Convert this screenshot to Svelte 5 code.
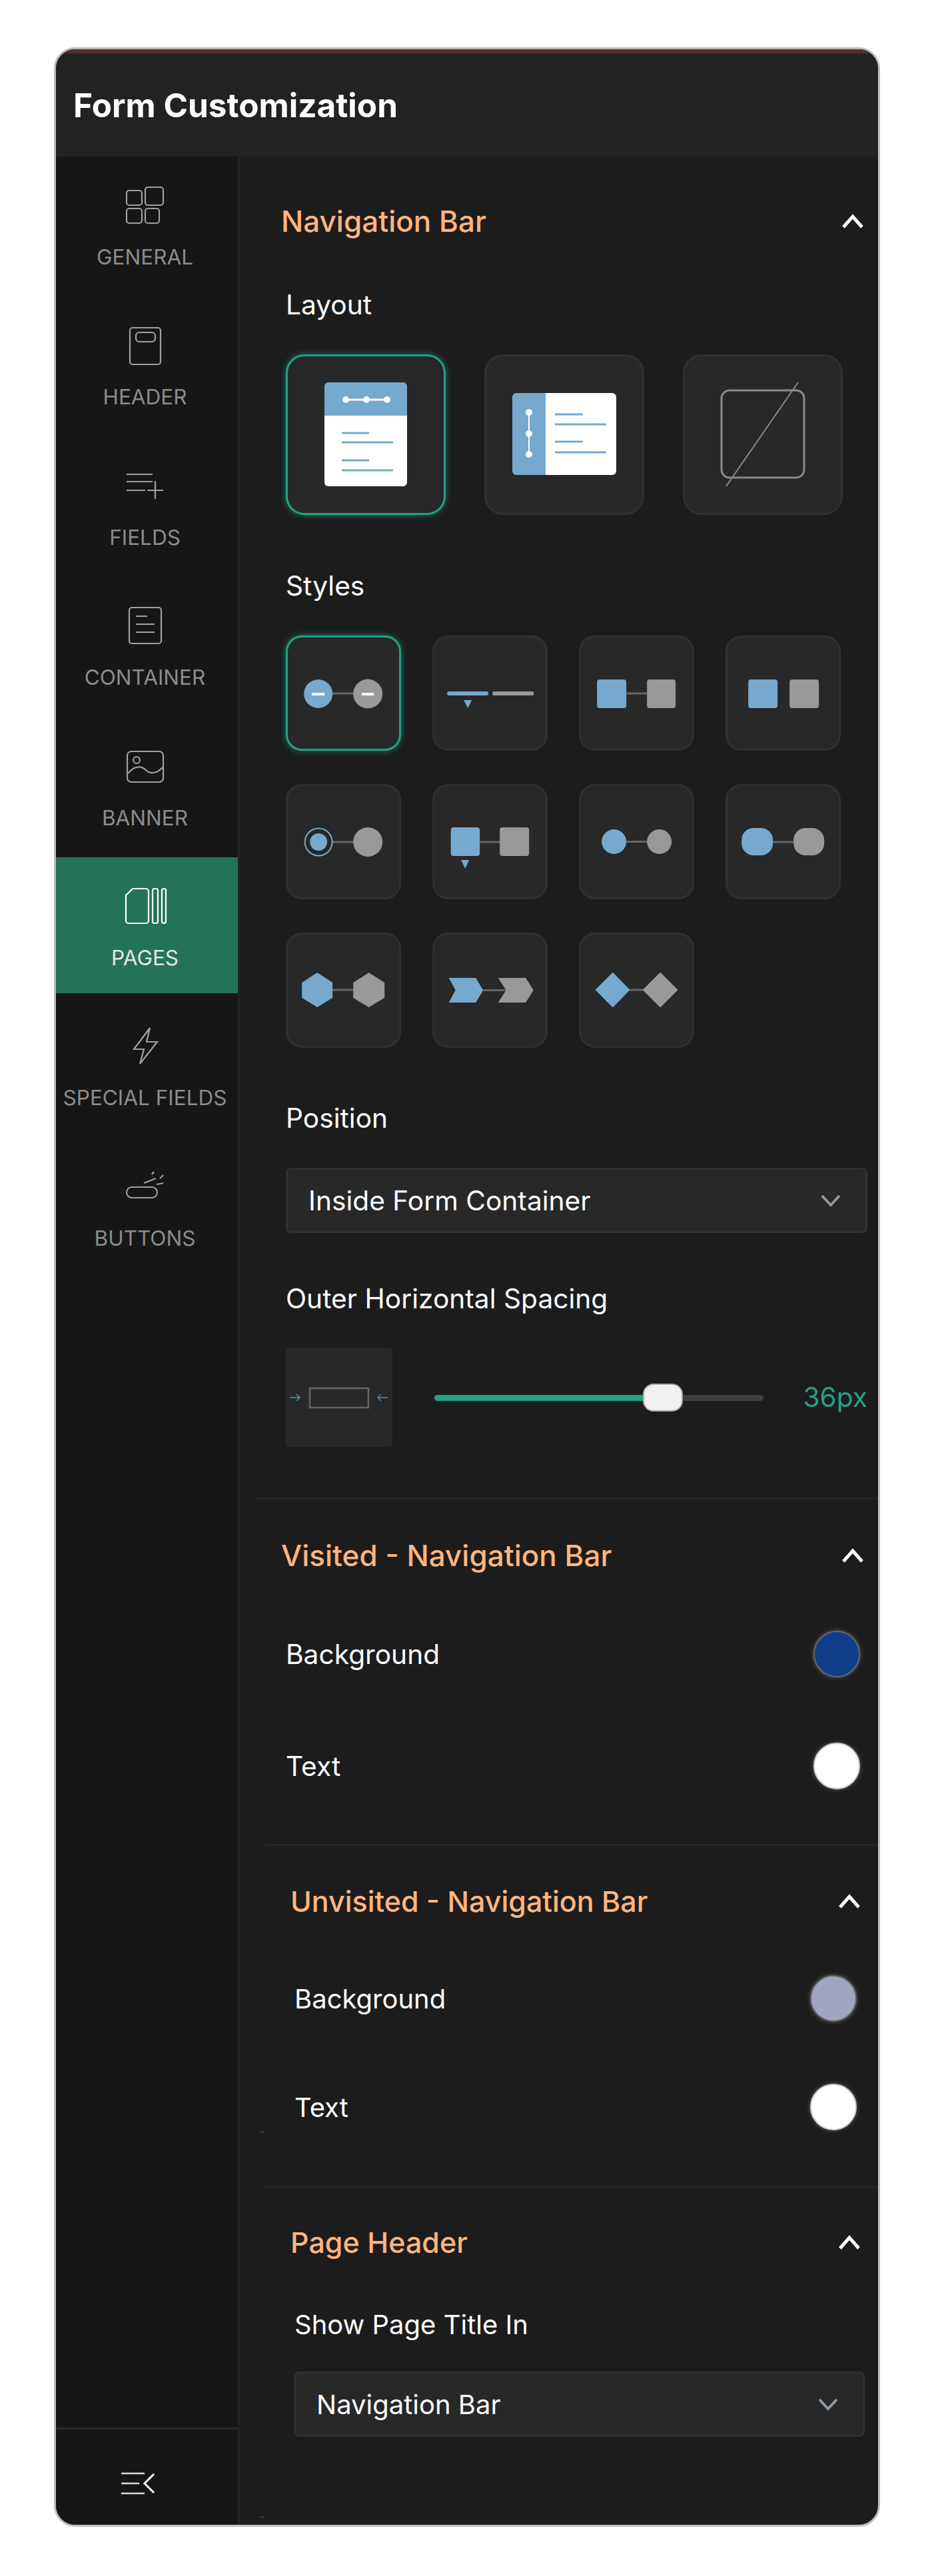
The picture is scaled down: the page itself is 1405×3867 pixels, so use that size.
<script>
  const B = '#76a9cd';
  const G = '#999999';
</script>

<div class="frame">
  <header class="top"><h1>Form Customization</h1></header>
  <div class="body">
    <aside class="side">
      <nav class="items">
        <div class="item">
          <svg class="ico" viewBox="0 0 70 70"><rect x="7" y="14" width="23" height="22" rx="4"/><rect x="35" y="9" width="27" height="27" rx="4"/><rect x="7" y="41" width="23" height="22" rx="4"/><rect x="35" y="41" width="21" height="22" rx="4"/></svg>
          <span>GENERAL</span>
        </div>
        <div class="item">
          <svg class="ico" viewBox="0 0 70 70"><rect x="12" y="10" width="46" height="55" rx="4"/><rect x="21" y="17" width="29" height="14" rx="5"/></svg>
          <span>HEADER</span>
        </div>
        <div class="item">
          <svg class="ico" viewBox="0 0 70 70"><path d="M7 19H46M7 30H46M7 43H35M38 43H62M50 29V56"/></svg>
          <span>FIELDS</span>
        </div>
        <div class="item">
          <svg class="ico" viewBox="0 0 70 70"><rect x="11" y="9" width="48" height="54" rx="4"/><path d="M21 22H38M21 34H49M21 46H49"/></svg>
          <span>CONTAINER</span>
        </div>
        <div class="item">
          <svg class="ico" viewBox="0 0 70 70"><rect x="8" y="14" width="54" height="46" rx="6"/><circle cx="22" cy="27" r="5"/><path d="M9 47C20 34 30 36 36 42C42 48 52 48 61 38"/></svg>
          <span>BANNER</span>
        </div>
        <div class="item active">
          <svg class="ico" viewBox="0 0 70 70"><path d="M16 10H36A4 4 0 0 1 40 14V58A4 4 0 0 1 36 62H10A4 4 0 0 1 6 58V20Z"/><rect x="46" y="10" width="8" height="52" rx="3"/><rect x="60" y="10" width="6" height="52" rx="3"/></svg>
          <span>PAGES</span>
        </div>
        <div class="item">
          <svg class="ico" viewBox="0 0 70 70"><path d="M42 9L18 41H33L27 63L53 30H37Z"/></svg>
          <span>SPECIAL FIELDS</span>
        </div>
        <div class="item">
          <svg class="ico" viewBox="0 0 70 70"><rect x="7" y="37" width="46" height="16" rx="8"/><path d="M33 31L51 24M52 33L62 31M45 18L48 14M57 24L62 19"/></svg>
          <span>BUTTONS</span>
        </div>
      </nav>
      <div class="collapse">
        <svg width="60" height="40" viewBox="0 0 60 40"><path class="m" d="M6 6H41M6 21H33M6 36H41"/><path class="c" d="M55 7L41 21L55 35"/></svg>
      </div>
    </aside>

    <main class="main">
      <section class="s1">
        <div class="head"><h2>Navigation Bar</h2>
          <svg class="up" viewBox="0 0 34 24"><path d="M3 21L17 5L31 21"/></svg></div>
        <div class="label l-layout">Layout</div>
        <div class="layouts">
          <div class="card sel">
            <svg viewBox="3 3 234 235">
              <path d="M58 92V48a6 6 0 0 1 6-6H176a6 6 0 0 1 6 6V92Z" fill={B}/>
              <path d="M58 92H182V192a6 6 0 0 1-6 6H64a6 6 0 0 1-6-6Z" fill="#fff"/>
              <path d="M90 68H152" stroke="#fff" stroke-width="3"/>
              <circle cx="90" cy="68" r="5" fill="#fff"/><circle cx="121" cy="68" r="5" fill="#fff"/><circle cx="152" cy="68" r="5" fill="#fff"/>
              <path d="M84 118H125M84 132H161M84 159H125M84 174H161" stroke={B} stroke-width="3"/>
            </svg>
          </div>
          <div class="card">
            <svg viewBox="3 3 234 235">
              <path d="M92 58V181H48a6 6 0 0 1-6-6V64a6 6 0 0 1 6-6Z" fill={B}/>
              <path d="M92 58H192a6 6 0 0 1 6 6V175a6 6 0 0 1-6 6H92Z" fill="#fff"/>
              <path d="M67 87V150" stroke="#fff" stroke-width="2"/>
              <circle cx="67" cy="87" r="5" fill="#fff"/><circle cx="67" cy="119" r="5" fill="#fff"/><circle cx="67" cy="150" r="5" fill="#fff"/>
              <path d="M106 90H148M106 105H183M106 131H148M106 147H183" stroke={B} stroke-width="3"/>
            </svg>
          </div>
          <div class="card">
            <svg viewBox="3 3 234 235">
              <rect x="58" y="54" width="124" height="131" rx="12" fill="none" stroke="#8a8a8a" stroke-width="3"/>
              <path d="M173 42L65 198" stroke="#8a8a8a" stroke-width="2"/>
            </svg>
          </div>
        </div>

        <div class="label l-styles">Styles</div>
        <div class="styles">
          <div class="card sm sel"><svg viewBox="3 3 167 167">
            <path d="M70 87H101" class="ln"/><circle cx="48.500" cy="87.500" r="21.500" fill={B}/><circle cx="123" cy="87.500" r="22" fill={G}/>
            <rect x="39" y="86" width="19" height="4" fill="#fff"/><rect x="114" y="86" width="18" height="4" fill="#fff"/>
          </svg></div>
          <div class="card sm"><svg viewBox="3 3 167 167">
            <rect x="22" y="84" width="62" height="6" rx="3" fill={B}/><rect x="90" y="84" width="62" height="6" rx="2" fill={G}/>
            <path d="M47 97H59L53 109Z" fill={B}/>
          </svg></div>
          <div class="card sm"><svg viewBox="3 3 167 167">
            <path d="M71 87H102" class="ln"/><rect x="27" y="66" width="44" height="43" rx="4" fill={B}/><rect x="102" y="66" width="43" height="43" rx="4" fill={G}/>
          </svg></div>
          <div class="card sm"><svg viewBox="3 3 167 167">
            <rect x="34" y="66" width="44" height="43" rx="4" fill={B}/><rect x="96" y="66" width="44" height="43" rx="4" fill={G}/>
          </svg></div>

          <div class="card sm"><svg viewBox="3 3 167 167">
            <path d="M70 87H101" class="ln"/><circle cx="49" cy="87" r="20.500" fill="none" stroke={B} stroke-width="2"/><circle cx="49" cy="87" r="13" fill={B}/><circle cx="123" cy="87" r="22" fill={G}/>
          </svg></div>
          <div class="card sm"><svg viewBox="3 3 167 167">
            <path d="M71 87H101" class="ln"/><rect x="27.500" y="65" width="43.500" height="43" rx="4" fill={B}/><rect x="101" y="65" width="44" height="43" rx="4" fill={G}/>
            <path d="M43 114H55L49 127Z" fill={B}/>
          </svg></div>
          <div class="card sm"><svg viewBox="3 3 167 167">
            <path d="M71 86.500H102" class="ln"/><circle cx="52.500" cy="86.500" r="18.500" fill={B}/><circle cx="120.500" cy="86.500" r="18.500" fill={G}/>
          </svg></div>
          <div class="card sm"><svg viewBox="3 3 167 167">
            <path d="M71 87H102" class="ln"/><rect x="24" y="66" width="47" height="41" rx="18" fill={B}/><rect x="102" y="66" width="46" height="41" rx="18" fill={G}/>
          </svg></div>

          <div class="card sm"><svg viewBox="3 3 167 167">
            <path d="M70 86H101" class="ln"/><path d="M47 60L70 75V98L47 112L24 98V75Z" fill={B}/><path d="M124.500 60L148 75V98L124.500 112L101 98V75Z" fill={G}/>
          </svg></div>
          <div class="card sm"><svg viewBox="3 3 167 167">
            <path d="M76 86.500H110" class="ln"/><path d="M24.500 68H65L76 86.500L65 105H24.500L34.500 86.500Z" fill={B}/><path d="M98.500 68H140L151.500 86.500L140 105H98.500L110.500 86.500Z" fill={G}/>
          </svg></div>
          <div class="card sm"><svg viewBox="3 3 167 167">
            <path d="M76 86H96" class="ln"/><path d="M50.500 60L76 86L50.500 112L25 86Z" fill={B} stroke={B} stroke-width="1" stroke-linejoin="round"/><path d="M122 60L148 86L122 112L96 86Z" fill={G} stroke={G} stroke-width="1" stroke-linejoin="round"/>
          </svg></div>
        </div>

        <div class="label l-pos">Position</div>
        <div class="select s-a"><span>Inside Form Container</span>
          <svg class="dn" viewBox="0 0 30 20"><path d="M2 3L15 17L28 3"/></svg></div>

        <div class="label l-outer">Outer Horizontal Spacing</div>
        <div class="slider">
          <div class="pv"><svg width="160" height="148" viewBox="0 0 160 148">
            <rect x="36" y="60" width="88" height="29" fill="none" stroke="#666" stroke-width="2.500"/>
            <path d="M6 74H21M16 69L21 74L16 79M153 74H138M143 69L138 74L143 79" fill="none" stroke="#4f8fb8" stroke-width="1.500"/>
          </svg></div>
          <div class="track"><div class="fill"></div><div class="thumb"></div></div>
          <div class="val">36px</div>
        </div>
      </section>

      <div class="div d1"></div>
      <section class="s2">
        <div class="head"><h2>Visited - Navigation Bar</h2>
          <svg class="up" viewBox="0 0 34 24"><path d="M3 21L17 5L31 21"/></svg></div>
        <div class="row r1"><span>Background</span><i class="sw blue"></i></div>
        <div class="row r2"><span>Text</span><i class="sw white"></i></div>
      </section>

      <div class="div d2"></div>
      <section class="s3">
        <div class="head"><h2>Unvisited - Navigation Bar</h2>
          <svg class="up" viewBox="0 0 34 24"><path d="M3 21L17 5L31 21"/></svg></div>
        <div class="row r3"><span>Background</span><i class="sw grey"></i></div>
        <div class="row r4"><span>Text</span><i class="sw white"></i></div>
        <b class="spot"></b>
      </section>

      <div class="div d3"></div>
      <section class="s4">
        <div class="head"><h2>Page Header</h2>
          <svg class="up" viewBox="0 0 34 24"><path d="M3 21L17 5L31 21"/></svg></div>
        <div class="label l-show">Show Page Title In</div>
        <div class="select s-b"><span>Navigation Bar</span>
          <svg class="dn" viewBox="0 0 30 20"><path d="M2 3L15 17L28 3"/></svg></div>
        <b class="spot2"></b>
      </section>
    </main>
  </div>
</div>

<style>
  :global(body) { margin: 0; background: #fff; }
  * { box-sizing: border-box; }
  .frame {
    position: relative;
    margin: 71px 0 0 81px;
    width: 1240px;
    height: 3722px;
    border: 3px solid #bcbcbc;
    border-radius: 32px;
    overflow: hidden;
    display: flex;
    flex-direction: column;
    background: #1c1c1c;
    font-family: Inter, "Liberation Sans", sans-serif;
    color: #fff;
  }
  .top {
    height: 161px;
    flex: none;
    background: #222;
    border-top: 6px solid #533130;
    display: flex;
    align-items: center;
    padding-left: 26px;
  }
  h1 { margin: 0; font-size: 49.500px; font-weight: 700; line-height: 60px; }
  .body { flex: 1; display: flex; min-height: 0; }

  .side {
    width: 276px;
    flex: none;
    background: #161616;
    border-right: 3px solid #222;
    display: flex;
    flex-direction: column;
    justify-content: space-between;
  }
  .items { display: flex; flex-direction: column; gap: 6.4px; }
  .item {
    height: 204px;
    padding-top: 37px;
    padding-right: 6px;
    display: flex;
    flex-direction: column;
    align-items: center;
    color: #8c8c8c;
  }
  .item span { margin-top: 22px; font-size: 31.500px; line-height: 44px; white-space: nowrap; }
  .item.active { background: #237359; color: #e6e6e6; }
  .ico { width: 70px; height: 70px; fill: none; stroke: #a0a0a0; stroke-width: 2.200; }
  .active .ico { stroke: #fff; }
  .collapse {
    height: 146px;
    border-top: 3px solid #2a2a2a;
    display: flex;
    justify-content: center;
    padding: 60px 29px 0 0;
  }
  .collapse svg { fill: none; stroke-width: 2.500; }
  .m { stroke: #d8d8d8; }
  .c { stroke: #fff; stroke-width: 3; }

  .main { flex: 1; min-width: 0; position: relative; overflow: hidden; }
  section { display: block; position: relative; }
  .head { display: flex; align-items: center; justify-content: space-between; height: 52px; }
  h2 { margin: 0; font-size: 44px; font-weight: 500; line-height: 52px; color: #ffb57f; white-space: nowrap; }
  .s3 h2, .s4 h2 { font-size: 43px; }
  .up { width: 34px; height: 24px; fill: none; stroke: #fff; stroke-width: 5; }
  .label { font-size: 40.700px; font-weight: 400; line-height: 48px; white-space: nowrap; }

  .s1 { padding: 71px 21px 76px 62px; }
  .s1 > :not(.head) { margin-left: 7px; }
  .l-layout { margin-top: 76px; }
  .layouts { margin-top: 50px; display: grid; grid-template-columns: repeat(3, 240px); gap: 58px; }
  .card {
    height: 241px;
    border: 3px solid #303030;
    border-radius: 28px;
    background: #282828;
    overflow: hidden;
  }
  .card svg { display: block; width: 100%; height: 100%; }
  .card.sm { height: 173px; border-radius: 24px; }
  .card.sel { border-color: #23a184; box-shadow: 0 0 10px rgba(35, 161, 132, .7); }
  .ln { stroke: #666; stroke-width: 3; fill: none; }

  .l-styles { margin-top: 83px; }
  .styles {
    margin-top: 50px;
    width: 833px;
    display: grid;
    grid-template-columns: repeat(4, 1fr);
    gap: 50px 46.500px;
  }
  .l-pos { margin-top: 82px; }
  .select {
    margin-top: 50px;
    height: 98px;
    display: flex;
    align-items: center;
    justify-content: space-between;
    background: #282828;
    border: 3px solid #303030;
    border-radius: 8px;
    font-size: 40.700px;
    font-weight: 400;
  }
  .s-a { width: 873px; padding: 0 37px 0 31px; }
  .dn { width: 30px; height: 20px; fill: none; stroke: #8e98ab; stroke-width: 4; }
  .l-outer { margin-top: 75px; }
  .slider { margin-top: 50px; display: flex; align-items: center; width: 873px; height: 148px; }
  .pv { width: 160px; height: 148px; background: #282828; border-radius: 4px; flex: none; }
  .pv svg { display: block; }
  .track { position: relative; margin-left: 63px; width: 494px; height: 9px; background: #3e3e3e; border-radius: 5px; flex: none; }
  .fill { width: 325px; height: 100%; background: #23a184; border-radius: 5px 0 0 5px; }
  .thumb {
    position: absolute;
    left: 313px;
    top: -17px;
    width: 60px;
    height: 42px;
    background: #f1f1f1;
    border: 2px solid #aaa;
    border-radius: 16px;
  }
  .val { margin-left: auto; font-size: 40.700px; line-height: 48px; color: #23a184; }

  .div { height: 3px; background: #262626; }
  .d1 { margin-left: 25px; }
  .d2, .d3 { margin-left: 38px; }

  .s2 { padding: 58px 21px 81px 62px; }
  .row { display: flex; align-items: center; justify-content: space-between; height: 72px; font-size: 40.700px; font-weight: 400; }
  .s2 .row { margin-left: 7px; padding-right: 6px; }
  .r1 { margin-top: 86px; }
  .r2 { margin-top: 96px; }
  .sw { display: block; width: 70px; height: 70px; border-radius: 50%; border: 2px solid #666; box-shadow: 0 0 6px rgba(255, 255, 255, .3); }
  .blue { background: #0f3f8a; }
  .grey { background: #a0a6bd; }
  .white { background: #fff; border-color: #ccc; }

  .s3 { padding: 57px 26px 83px 76px; }
  .s3 .row { margin-left: 6px; padding-right: 6px; font-size: 40px; }
  .r3 { margin-top: 84px; }
  .r4 { margin-top: 91px; }
  .spot { position: absolute; left: 30px; top: 428px; width: 7px; height: 3px; background: #333; }

  .s4 { padding: 55px 26px 0 76px; }
  .l-show { margin-top: 74px; margin-left: 6px; font-size: 40px; }
  .s-b { margin-top: 46px; margin-left: 5px; width: 857px; padding: 0 37px 0 31px; font-size: 40px; }
  .spot2 { position: absolute; left: 30px; top: 492px; width: 7px; height: 3px; background: #333; }
</style>
